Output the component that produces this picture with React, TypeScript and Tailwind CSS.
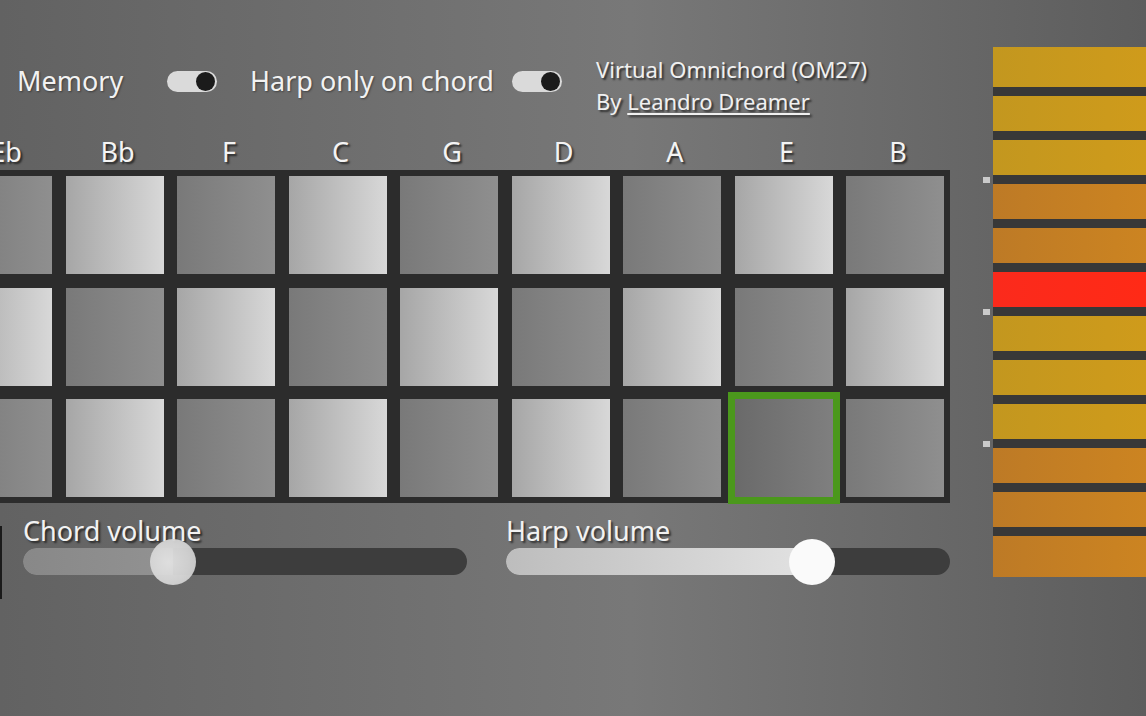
const chords = ["Eb", "Bb", "F", "C", "G", "D", "A", "E", "B"];

// string bands on the right, top to bottom
const bands: ("y" | "o" | "r")[] = ["y", "y", "y", "o", "o", "r", "y", "y", "y", "o", "o", "o"];

const bandColor = {
  y: "bg-[linear-gradient(90deg,#c3971f,#cf9b1b)]",
  o: "bg-[linear-gradient(90deg,#bd7a26,#cc8421)]",
  r: "bg-[linear-gradient(90deg,#fb2a1c,#ff2a16)]",
};

const shadow = "[text-shadow:2px_2px_2px_rgba(0,0,0,0.6)]";

const Toggle = () => (
  <div className="shrink-0 flex items-center justify-end w-[50px] h-[21px] rounded-full bg-[#dadada] pr-[2px]">
    <div className="w-[19px] h-[19px] rounded-full bg-[#1b1b1b]" />
  </div>
);

interface SliderProps {
  label: string;
  value: number; // px of fill
  fill: string;
  knob: string;
}

const Slider = ({ label, value, fill, knob }: SliderProps) => (
  <div className="w-[444px] flex flex-col">
    <span className={`text-[27px] leading-[36px] text-[#f2f2f2] whitespace-nowrap ${shadow}`}>{label}</span>
    <div className="relative h-[27px] mt-[-1px] rounded-full bg-[#3d3d3d]">
      <div className={`h-full rounded-l-full ${fill}`} style={{ width: value }} />
      <div
        className={`absolute top-1/2 -translate-y-1/2 -translate-x-1/2 w-[46px] h-[46px] rounded-full ${knob}`}
        style={{ left: value }}
      />
    </div>
  </div>
);

export default function App() {
  return (
    <div className="w-[1146px] h-[716px] overflow-hidden flex items-start font-['Noto_Sans',sans-serif] bg-[linear-gradient(90deg,#626262_0%,#787878_55%,#5d5d5d_100%)]">
      {/* main panel */}
      <div className="w-[950px] shrink-0 flex flex-col">
        {/* top row */}
        <div className="flex items-start pt-[54px] whitespace-nowrap">
          <div className="shrink-0 flex items-center h-[36px] mt-[9px] text-[27px] text-[#f2f2f2] [text-shadow:1px_1px_2px_rgba(0,0,0,0.4)]">
            <span className="shrink-0 w-[167px] pl-[17px]">Memory</span>
            <Toggle />
            <span className="shrink-0 w-[295px] pl-[33px]">Harp only on chord</span>
            <Toggle />
          </div>
          <div className={`shrink-0 ml-[34px] mt-[-1px] text-[22px] leading-[32px] text-[#f0f0f0] ${shadow}`}>
            <p>Virtual Omnichord (OM27)</p>
            <p>
              By <span className="underline underline-offset-[3px]">Leandro Dreamer</span>
            </p>
          </div>
        </div>

        {/* chord names */}
        <div className="ml-[-52px] mt-[17px] h-[36px] px-[6px] grid grid-cols-[repeat(9,98px)] gap-x-[13.5px]">
          {chords.map((c) => (
            <span key={c} className={`text-center pl-[6px] text-[27px] leading-[36px] text-[#f4f4f4] ${shadow}`}>
              {c}
            </span>
          ))}
        </div>

        {/* chord buttons */}
        <div className="ml-[-52px] w-[1002px] p-[6px] bg-[#2c2c2c] grid grid-cols-[repeat(9,98px)] gap-[13.5px]">
          {[0, 1, 2].map((r) =>
            chords.map((c, i) => {
              const pressed = r === 2 && i === 7;
              const light = (r + i) % 2 === 1;
              let cls = "bg-[linear-gradient(90deg,#797979,#8f8f8f)]";
              if (light) cls = "bg-[linear-gradient(90deg,#a6a6a6,#d8d8d8)]";
              if (pressed) cls = "bg-[linear-gradient(90deg,#6a6a6a,#7f7f7f)] shadow-[0_0_0_7px_#4b981c]";
              return <div key={`${r}-${c}`} className={`h-[98px] ${cls}`} />;
            })
          )}
        </div>

        {/* volume sliders */}
        <div className="flex items-start mt-[10px]">
          <div className="w-[2px] h-[73px] mt-[13px] bg-[#1a1a1a]" />
          <div className="ml-[21px]">
            <Slider
              label="Chord volume"
              value={150}
              fill="bg-[linear-gradient(90deg,#888888,#929292)]"
              knob="bg-[radial-gradient(circle_at_40%_50%,#e2e2e2_0%,#d6d6d6_55%,#c8c8c8_100%)] opacity-95"
            />
          </div>
          <div className="ml-[39px]">
            <Slider
              label="Harp volume"
              value={306}
              fill="bg-[linear-gradient(90deg,#bdbdbd,#e2e2e2)]"
              knob="bg-[#fafafa]"
            />
          </div>
        </div>
      </div>

      {/* tick marks */}
      <div className="ml-[33px] mt-[47px] pt-[130px] w-[7px] flex flex-col gap-[126px]">
        <div className="h-[6px] bg-[#cacaca]" />
        <div className="h-[6px] bg-[#cacaca]" />
        <div className="h-[6px] bg-[#cacaca]" />
      </div>

      {/* strings */}
      <div className="ml-[3px] mt-[47px] flex-1 flex flex-col gap-[9px] bg-[#383838]">
        {bands.map((b, i) => (
          <div
            key={i}
            className={`${i === 0 ? "h-[40px]" : i === bands.length - 1 ? "h-[41px]" : "h-[35px]"} ${bandColor[b]}`}
          />
        ))}
      </div>
    </div>
  );
}
